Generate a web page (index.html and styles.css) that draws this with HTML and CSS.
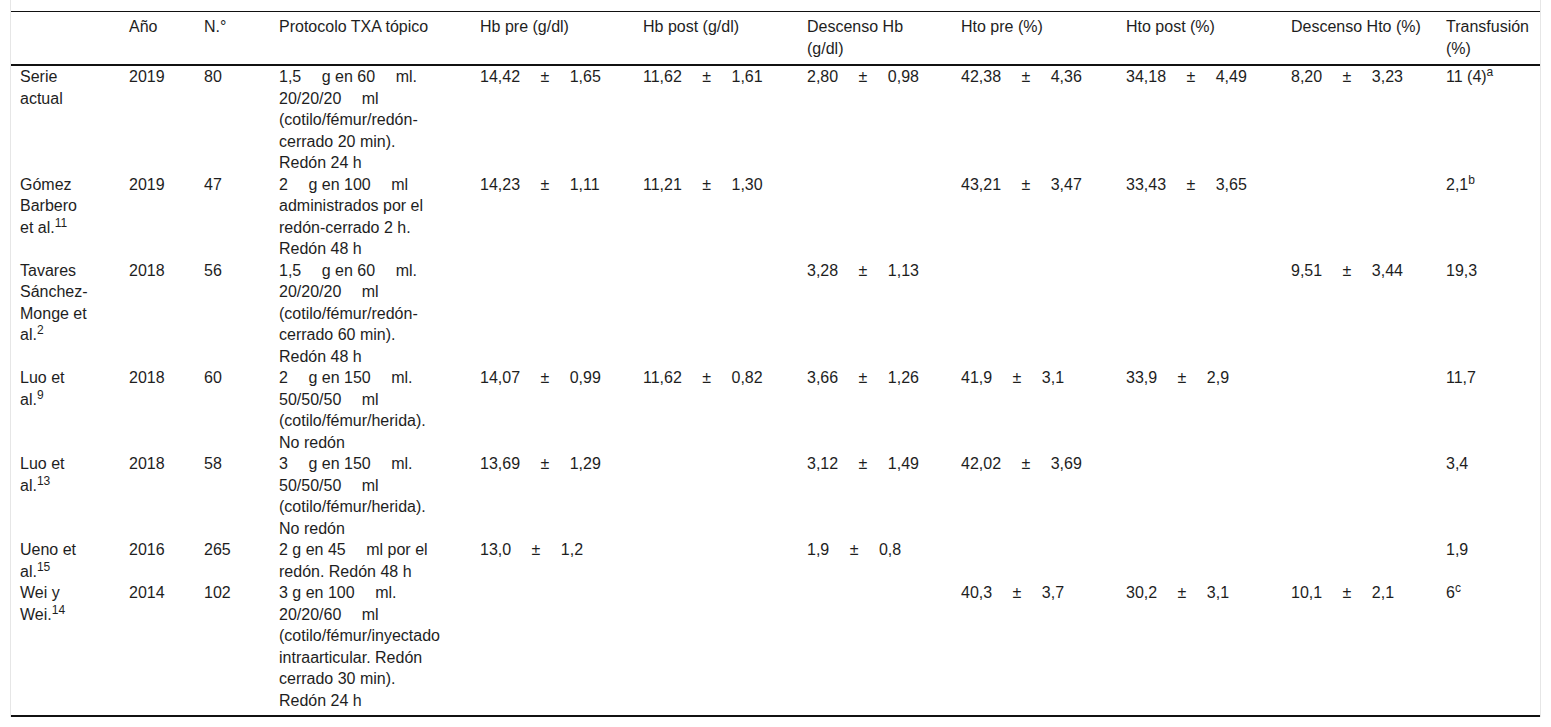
FILE: index.html
```html
<!DOCTYPE html>
<html lang="es">
<head>
<meta charset="utf-8">
<title>Tabla TXA tópico</title>
<link rel="stylesheet" href="styles.css">
</head>
<body>
<div class="wrap">
<table class="tbl">
<colgroup>
<col class="c1"><col class="c2"><col class="c3"><col class="c4"><col class="c5"><col class="c6"><col class="c7"><col class="c8"><col class="c9"><col class="c10"><col class="c11">
</colgroup>
<thead>
<tr>
<th class="first"></th>
<th>Año</th>
<th>N.°</th>
<th class="proto">Protocolo TXA tópico</th>
<th>Hb pre (g/dl)</th>
<th>Hb post (g/dl)</th>
<th>Descenso Hb (g/dl)</th>
<th>Hto pre (%)</th>
<th>Hto post (%)</th>
<th>Descenso Hto (%)</th>
<th>Transfusión (%)</th>
</tr>
</thead>
<tbody>
<tr>
<td class="first">Serie actual</td>
<td>2019</td>
<td>80</td>
<td class="proto">1,5<span class="q"></span>g en 60<span class="q"></span>ml. 20/20/20<span class="q"></span>ml (cotilo/fémur/redón-cerrado 20 min). Redón 24 h</td>
<td>14,42 <span class="pm">±</span> 1,65</td>
<td>11,62 <span class="pm">±</span> 1,61</td>
<td>2,80 <span class="pm">±</span> 0,98</td>
<td>42,38 <span class="pm">±</span> 4,36</td>
<td>34,18 <span class="pm">±</span> 4,49</td>
<td>8,20 <span class="pm">±</span> 3,23</td>
<td>11 (4)<sup>a</sup></td>
</tr>
<tr>
<td class="first">Gómez Barbero et al.<sup>11</sup></td>
<td>2019</td>
<td>47</td>
<td class="proto">2<span class="q"></span>g en 100<span class="q"></span>ml administrados por el redón-cerrado 2 h. Redón 48 h</td>
<td>14,23 <span class="pm">±</span> 1,11</td>
<td>11,21 <span class="pm">±</span> 1,30</td>
<td></td>
<td>43,21 <span class="pm">±</span> 3,47</td>
<td>33,43 <span class="pm">±</span> 3,65</td>
<td></td>
<td>2,1<sup>b</sup></td>
</tr>
<tr>
<td class="first">Tavares Sánchez-Monge et al.<sup>2</sup></td>
<td>2018</td>
<td>56</td>
<td class="proto">1,5<span class="q"></span>g en 60<span class="q"></span>ml. 20/20/20<span class="q"></span>ml (cotilo/fémur/redón-cerrado 60 min). Redón 48 h</td>
<td></td>
<td></td>
<td>3,28 <span class="pm">±</span> 1,13</td>
<td></td>
<td></td>
<td>9,51 <span class="pm">±</span> 3,44</td>
<td>19,3</td>
</tr>
<tr>
<td class="first">Luo et al.<sup>9</sup></td>
<td>2018</td>
<td>60</td>
<td class="proto">2<span class="q"></span>g en 150<span class="q"></span>ml. 50/50/50<span class="q"></span>ml (cotilo/fémur/herida). No redón</td>
<td>14,07 <span class="pm">±</span> 0,99</td>
<td>11,62 <span class="pm">±</span> 0,82</td>
<td>3,66 <span class="pm">±</span> 1,26</td>
<td>41,9 <span class="pm">±</span> 3,1</td>
<td>33,9 <span class="pm">±</span> 2,9</td>
<td></td>
<td>11,7</td>
</tr>
<tr>
<td class="first">Luo et al.<sup>13</sup></td>
<td>2018</td>
<td>58</td>
<td class="proto">3<span class="q"></span>g en 150<span class="q"></span>ml. 50/50/50<span class="q"></span>ml (cotilo/fémur/herida). No redón</td>
<td>13,69 <span class="pm">±</span> 1,29</td>
<td></td>
<td>3,12 <span class="pm">±</span> 1,49</td>
<td>42,02 <span class="pm">±</span> 3,69</td>
<td></td>
<td></td>
<td>3,4</td>
</tr>
<tr>
<td class="first">Ueno et al.<sup>15</sup></td>
<td>2016</td>
<td>265</td>
<td class="proto">2 g en 45<span class="q"></span>ml por el redón. Redón 48 h</td>
<td>13,0 <span class="pm">±</span> 1,2</td>
<td></td>
<td>1,9 <span class="pm">±</span> 0,8</td>
<td></td>
<td></td>
<td></td>
<td>1,9</td>
</tr>
<tr class="last">
<td class="first">Wei y Wei.<sup>14</sup></td>
<td>2014</td>
<td>102</td>
<td class="proto">3 g en 100<span class="q"></span>ml. 20/20/60<span class="q"></span>ml (cotilo/fémur/inyectado intraarticular. Redón cerrado 30 min). Redón 24 h</td>
<td></td>
<td></td>
<td></td>
<td>40,3 <span class="pm">±</span> 3,7</td>
<td>30,2 <span class="pm">±</span> 3,1</td>
<td>10,1 <span class="pm">±</span> 2,1</td>
<td>6<sup>c</sup></td>
</tr>
</tbody>
</table>
</div>
</body>
</html>
```
FILE: styles.css
```css
html, body {
  margin: 0;
  padding: 0;
  background: #fff;
}

body {
  font-family: "Liberation Sans", Arial, sans-serif;
  font-size: 16px;
  color: #1e1e1e;
}

.wrap {
  margin: 0 10px;
  padding-top: 11px;
  border-left: 1px solid #e6e6e6;
  border-right: 1px solid #e6e6e6;
}

.tbl {
  width: 100%;
  table-layout: fixed;
  border-collapse: collapse;
  border-top: 1px solid #111;
  border-bottom: 2px solid #111;
  line-height: 21.5px;
}

.c1 { width: 109px; }
.c2 { width: 75px; }
.c3 { width: 75px; }
.c4 { width: 201px; }
.c5 { width: 163px; }
.c6 { width: 164px; }
.c7 { width: 154px; }
.c8 { width: 165px; }
.c9 { width: 165px; }
.c10 { width: 155px; }
.c11 { width: 103px; }

.tbl th {
  font-weight: normal;
  text-align: left;
  vertical-align: top;
  padding: 4px 9px 5px 9px;
  border-bottom: 2px solid #111;
}

.tbl td {
  text-align: left;
  vertical-align: top;
  padding: 0 9px;
}

.tbl .first {
  padding-right: 31px;
}

.tbl .proto {
  padding-right: 27px;
}

.tbl tr.last td {
  padding-bottom: 4px;
}

.pm {
  margin: 0 16px;
}

.q {
  display: inline-block;
  width: 20.5px;
}

sup {
  font-size: 12px;
  line-height: 10px;
  vertical-align: 6px;
}
```
